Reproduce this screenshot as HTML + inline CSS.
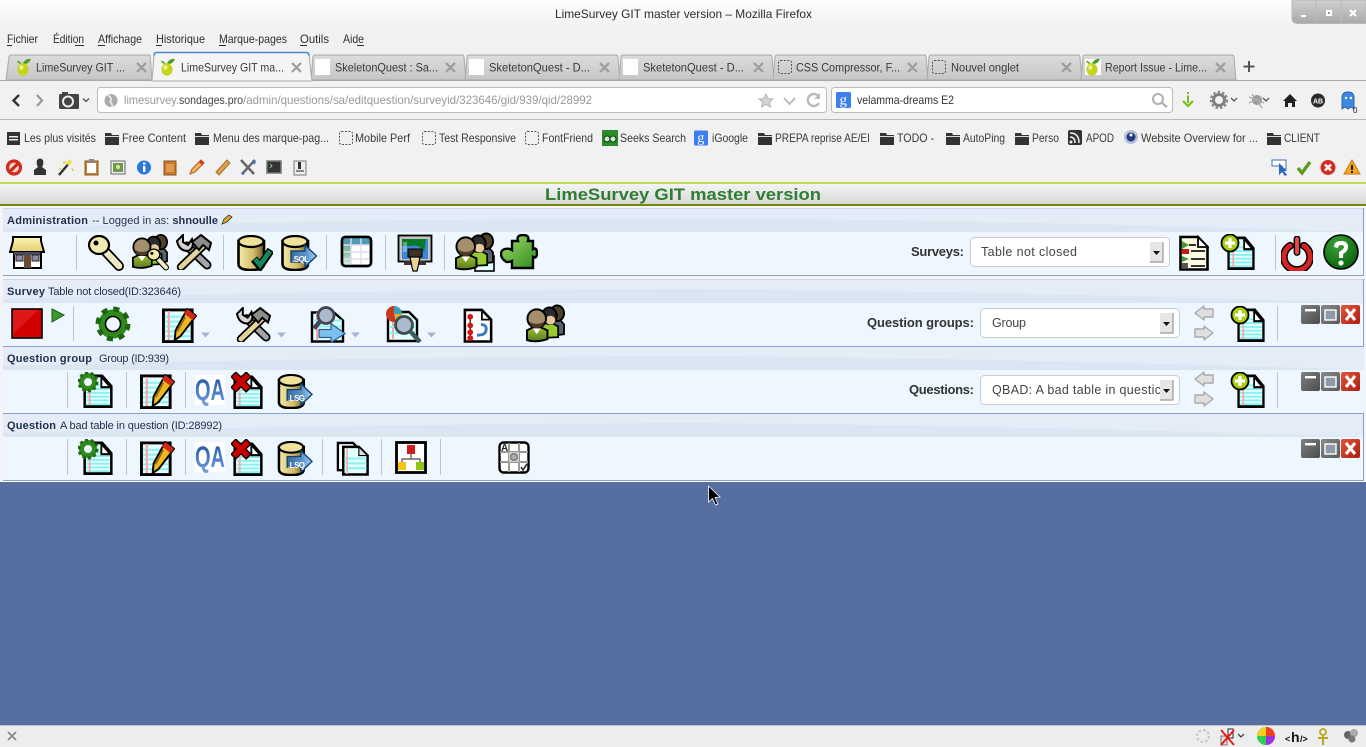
<!DOCTYPE html>
<html><head><meta charset="utf-8"><title>LimeSurvey GIT master version</title>
<style>
html,body{margin:0;padding:0;background:#566fa0;overflow:hidden;width:1366px;height:747px}
svg{display:block}
text{font-family:"Liberation Sans",sans-serif;white-space:pre}
.c{font-size:12px;fill:#3a3a3a}
.m{font-size:12px;fill:#2e2e2e}
.p{font-size:11px;fill:#1f2f4c}
.b{font-size:11px;font-weight:bold;fill:#1f2f4c}
.l{font-size:13px;font-weight:bold;fill:#333}
.s{font-size:12.5px;fill:#444}
</style></head><body>
<svg width="1366" height="747" viewBox="0 0 1366 747" xmlns="http://www.w3.org/2000/svg">
<defs>
<linearGradient id="gt" x1="0" y1="0" x2="0" y2="1"><stop offset="0" stop-color="#fff"/><stop offset="1" stop-color="#f0f0f0"/></linearGradient>
<linearGradient id="gw" x1="0" y1="0" x2="0" y2="1"><stop offset="0" stop-color="#d0d0d0"/><stop offset="1" stop-color="#a9a9a9"/></linearGradient>
<linearGradient id="gtab" x1="0" y1="0" x2="0" y2="1"><stop offset="0" stop-color="#dcdcdc"/><stop offset="1" stop-color="#c6c6c6"/></linearGradient>
<linearGradient id="ghd" x1="0" y1="0" x2="0" y2="1"><stop offset="0" stop-color="#f4f4f4"/><stop offset="1" stop-color="#d8d8d8"/></linearGradient>
<linearGradient id="gold" x1="0" y1="0" x2="1" y2="0"><stop offset="0" stop-color="#f4eaa8"/><stop offset=".6" stop-color="#d2bc68"/><stop offset="1" stop-color="#6e5a24"/></linearGradient>
<linearGradient id="gbtn" x1="0" y1="0" x2="1" y2="1"><stop offset="0" stop-color="#808080"/><stop offset="1" stop-color="#4c4c4c"/></linearGradient>
<linearGradient id="gred" x1="0" y1="0" x2="1" y2="1"><stop offset="0" stop-color="#e4563a"/><stop offset="1" stop-color="#a81e10"/></linearGradient>
<radialGradient id="ggreen" cx=".4" cy=".3" r=".8"><stop offset="0" stop-color="#3aa23a"/><stop offset="1" stop-color="#045c04"/></radialGradient>
<linearGradient id="gpz" x1="0" y1="0" x2="1" y2="1"><stop offset="0" stop-color="#a4dc6c"/><stop offset="1" stop-color="#2c8a1e"/></linearGradient>
<linearGradient id="gqa" x1="0" y1="0" x2="0" y2="1"><stop offset="0" stop-color="#1a50a6"/><stop offset="1" stop-color="#7aa4e0"/></linearGradient>
<linearGradient id="garr" x1="0" y1="0" x2="1" y2="0"><stop offset="0" stop-color="#3a6c9c"/><stop offset=".6" stop-color="#5c94c8"/><stop offset="1" stop-color="#a4d4fa"/></linearGradient>
<linearGradient id="groof" x1="0" y1="0" x2="0" y2="1"><stop offset="0" stop-color="#fbf4b8"/><stop offset="1" stop-color="#e4d070"/></linearGradient>
<linearGradient id="gbody" x1="0" y1="0" x2="0" y2="1"><stop offset="0" stop-color="#a8c83a"/><stop offset="1" stop-color="#5a7c1c"/></linearGradient>
<linearGradient id="gtl" x1="0" y1="0" x2="0" y2="1"><stop offset="0" stop-color="#58a0a0"/><stop offset=".6" stop-color="#8cc8a0"/><stop offset="1" stop-color="#e8f4ec"/></linearGradient>

<symbol id="page" viewBox="0 0 36 36" preserveAspectRatio="none"><path d="M2 2H23L34 13V34.500H2Z" fill="#e4ffff" stroke="#000" stroke-width="3"/><path d="M4 12H22M4 16H32M4 20H32M4 24H32M4 28H32M4 32H32" stroke="#8af0f0" stroke-width="2"/><path d="M8 4V33" stroke="#f6a8a8" stroke-width="2.200"/><path d="M22 3V14H33Z" fill="#fff" stroke="#000" stroke-width="2.200"/></symbol>
<symbol id="plusdoc" viewBox="0 0 36 36"><use href="#page" x="7" y="2" width="28" height="34"/><circle cx="10" cy="9" r="8.500" fill="#a8d010" stroke="#000" stroke-width="1.800"/><path d="M10 4V14M5 9H15" stroke="#fff" stroke-width="3.200"/></symbol>
<symbol id="geardoc" viewBox="0 0 36 36"><use href="#page" x="5" y="2" width="30" height="34"/><circle cx="10" cy="10" r="6.500" fill="#eef6ff" stroke="#2f8a1e" stroke-width="5"/><circle cx="10" cy="10" r="9" fill="none" stroke="#1e6a10" stroke-width="3" stroke-dasharray="3 2.600"/></symbol>
<symbol id="deldoc" viewBox="0 0 33 37"><use href="#page" x="2" y="3" width="30" height="34"/><path d="M2 2L18 18M18 2L2 18" stroke="#000" stroke-width="8"/><path d="M3 3L17 17M17 3L3 17" stroke="#c80000" stroke-width="5.500"/></symbol>
<symbol id="editdoc" viewBox="0 0 36 36"><path d="M1.500 2H31V34.500H1.500Z" fill="#e4ffff" stroke="#000" stroke-width="3"/><path d="M3 9H29M3 14H29M3 19H29M3 24H29M3 29H29" stroke="#8af0f0" stroke-width="2"/><path d="M7 3V33" stroke="#f6a8a8" stroke-width="2.200"/><path d="M26 1L35 8L19 29L13 33L14 23Z" fill="#f0b820" stroke="#000" stroke-width="2"/><path d="M26 1L35 8L31.500 12.500L22.500 5.500Z" fill="#d02818"/><path d="M24 9L16 24" stroke="#8c6010" stroke-width="1.500"/></symbol>
<symbol id="gear" viewBox="0 0 36 36"><circle cx="18" cy="18" r="11" fill="none" stroke="#2f8a1e" stroke-width="7"/><circle cx="18" cy="18" r="15" fill="none" stroke="#1c6410" stroke-width="5" stroke-dasharray="6 5.800"/><circle cx="18" cy="18" r="7.500" fill="#eef6ff" stroke="#000" stroke-width="1.500"/></symbol>
<symbol id="key" viewBox="0 0 36 36"><path d="M16 15L31 31" stroke="#000" stroke-width="10" stroke-linecap="round"/><path d="M16 15L31 31" stroke="#efe9c4" stroke-width="6.500" stroke-linecap="round"/><ellipse cx="11" cy="10" rx="10" ry="9" fill="#f2eab0" stroke="#000" stroke-width="2.200"/><circle cx="8" cy="8" r="2.500" fill="#000"/></symbol>
<symbol id="users" viewBox="0 0 40 38"><path d="M24 32V17L34 14L39 20V30Z" fill="#56666e" stroke="#000" stroke-width="1.800"/><ellipse cx="32" cy="8.500" rx="7" ry="8" fill="#4f422c" stroke="#000" stroke-width="2"/><path d="M14 34V21L24 17L33 22V33Z" fill="#96cc30" stroke="#000" stroke-width="1.800"/><ellipse cx="24" cy="11" rx="7.500" ry="8.500" fill="#2c2c2c" stroke="#000" stroke-width="2"/><ellipse cx="25" cy="15.500" rx="5" ry="4.500" fill="#e8c8a0"/><path d="M1 36V26L11 21L22 26V35Q10 39 1 36Z" fill="url(#gbody)" stroke="#000" stroke-width="2"/><ellipse cx="11" cy="14" rx="9.500" ry="9.500" fill="#a58e6c" stroke="#000" stroke-width="2"/><path d="M3 17Q11 22 19 17Q18 23 11 24Q4 23 3 17Z" fill="#4e3a26"/><path d="M7 24L11 30L15 24Z" fill="#fff"/></symbol>
<symbol id="ukey" viewBox="0 0 38 38"><use href="#users" x="0" y="0" width="36" height="37"/><use href="#key" x="15" y="15" width="22" height="23"/></symbol>
<symbol id="udoc" viewBox="0 0 40 40"><rect x="20" y="24" width="19" height="15" fill="#e4ffff" stroke="#000" stroke-width="1.600"/><use href="#users" x="0" y="0" width="39" height="39"/></symbol>
<symbol id="tools" viewBox="0 0 36 36"><path d="M11 12L31 31" stroke="#000" stroke-width="9" stroke-linecap="round"/><path d="M11 12L31 31" stroke="#a4a4a4" stroke-width="5.500" stroke-linecap="round"/><path d="M1 7L7 1L7 8L12 11L16 5Q19 14 12 17Q3 17 1 7Z" fill="#d4d4d4" stroke="#000" stroke-width="2"/><path d="M27 12L5 33" stroke="#000" stroke-width="8.500" stroke-linecap="round"/><path d="M27 12L5 33" stroke="#e4d49c" stroke-width="5" stroke-linecap="round"/><path d="M16 8L25 1L35 9L33 16L27 11L23 16Z" fill="#8c8c8c" stroke="#000" stroke-width="2"/></symbol>
<symbol id="db" viewBox="0 0 36 36"><path d="M1.500 6V29Q1.500 35 14 35Q27 35 27 29V6Z" fill="url(#gold)" stroke="#000" stroke-width="2.600"/><ellipse cx="14" cy="6.500" rx="12.500" ry="5.500" fill="#efe39c" stroke="#000" stroke-width="2.200"/></symbol>
<symbol id="dbcheck" viewBox="0 0 36 36"><use href="#db"/><path d="M17 24L23 31L34 15" fill="none" stroke="#000" stroke-width="8"/><path d="M18 24L23 30L33 16" fill="none" stroke="#12885c" stroke-width="4.800"/></symbol>
<symbol id="dbout" viewBox="0 0 36 36"><use href="#db"/><path d="M10 16H24V10L35.500 21L24 32V27H10Z" fill="url(#garr)" stroke="#16446e" stroke-width="1.400"/></symbol>
<symbol id="table" viewBox="0 0 33 33"><rect x="2" y="2" width="29" height="29" rx="3" fill="#fff" stroke="#000" stroke-width="2.400"/><path d="M2 2H11V31H2Z" fill="url(#gtl)"/><path d="M2 2H31V10H2Z" fill="#4f9ab4"/><path d="M11 2V31M21 2V31M2 10H31M2 17H31M2 24H31" stroke="#dde" stroke-width="1.400"/><rect x="2" y="2" width="29" height="29" rx="3.500" fill="none" stroke="#000" stroke-width="2.600"/></symbol>
<symbol id="mon" viewBox="0 0 36 38"><rect x="1.500" y="1.500" width="33" height="26" fill="#c4c4c4" stroke="#000" stroke-width="1.800"/><rect x="5" y="5" width="26" height="20" fill="#3c88d8"/><path d="M5 5H29L27 19Q24 10 14 12H5Z" fill="#0a7a28"/><path d="M6 8H10V18H6Z" fill="#fff" opacity=".35"/><rect x="7" y="27" width="22" height="4" fill="#333"/><rect x="11" y="15" width="14" height="8" fill="#3c3024" stroke="#000"/><path d="M13 23H23L21 33L20 37H16L15 33Z" fill="#ecd494" stroke="#000" stroke-width="1.200"/></symbol>
<symbol id="puz" viewBox="0 0 38 36"><path d="M12 7H18Q16 1 23 1Q30 1 28 7H33V15Q37 13 37 19Q37 25 33 23V34H12V27Q7 29 5 27Q1 24 1 20Q1 16 5 15Q9 14 12 16Z" fill="url(#gpz)" stroke="#000" stroke-width="2.400"/></symbol>
<symbol id="home" viewBox="0 0 36 34"><rect x="5" y="14" width="27" height="19" fill="#fff" stroke="#000" stroke-width="2"/><path d="M1 17L4 6L4 2H32V6L35 17Z" fill="url(#groof)" stroke="#000" stroke-width="2"/><rect x="5" y="17" width="26" height="3" fill="#4c4c60"/><rect x="15" y="20" width="7" height="13" fill="#6a4a32"/><rect x="7" y="20" width="7" height="6" fill="#8e8aa8" stroke="#222"/><rect x="23" y="20" width="7" height="6" fill="#8e8aa8" stroke="#222"/></symbol>
<symbol id="list" viewBox="0 0 30 36"><path d="M1.500 2H19L28.500 12V34.500H1.500Z" fill="#fffce0" stroke="#000" stroke-width="2.600"/><path d="M19 2V12H29Z" fill="#fff" stroke="#000" stroke-width="1.800"/><path d="M3 6L10 10L3 14Z" fill="#3c9c3c"/><rect x="3" y="14" width="7" height="5" fill="#c81818"/><path d="M3 21L10 24L3 27Z" fill="#3c9c3c"/><path d="M3 28H9V33H3Z" fill="#555"/><path d="M10 10H17M12 16H26M12 24H26M12 31H26" stroke="#333" stroke-width="2"/></symbol>
<symbol id="power" viewBox="0 0 32 36"><path d="M9 10A13.500 13.500 0 1 0 23 10" fill="none" stroke="#000" stroke-width="8" stroke-linecap="round"/><path d="M9 10A13.500 13.500 0 1 0 23 10" fill="none" stroke="#d62424" stroke-width="5" stroke-linecap="round"/><path d="M16 3V17" stroke="#000" stroke-width="7" stroke-linecap="round"/><path d="M16 3V17" stroke="#e24c4c" stroke-width="4" stroke-linecap="round"/></symbol>
<symbol id="help" viewBox="0 0 36 36"><circle cx="18" cy="18" r="17" fill="url(#ggreen)" stroke="#000" stroke-width="1.600"/><path d="M11 13Q11 7 18 7Q25 7 25 13Q25 17 20 20V24H16V18Q21 15 21 13Q21 11 18 11Q15 11 15 14Z" fill="#fff"/><circle cx="18" cy="29" r="2.600" fill="#fff"/></symbol>
<symbol id="searchx" viewBox="0 0 36 36"><path d="M2 6H24L33 14V35H2Z" fill="#e4ffff" stroke="#000" stroke-width="2.400"/><path d="M7 6V34" stroke="#f6a8a8" stroke-width="2"/><path d="M3 14H32M3 20H32" stroke="#8af0f0" stroke-width="2"/><path d="M4 22L10 15" stroke="#445" stroke-width="4.500"/><circle cx="16" cy="9" r="8" fill="#aabbd0" stroke="#445" stroke-width="2.800"/><path d="M9 23H21V17L35 27L21 36V31H9Z" fill="#7cc0f0" stroke="#2c5c8c" stroke-width="1.200"/></symbol>
<symbol id="stats" viewBox="0 0 38 38"><path d="M4 7H25L33 15V36H4Z" fill="#e4ffff" stroke="#000" stroke-width="2.400"/><path d="M9 8V35" stroke="#f6a8a8" stroke-width="2"/><path d="M5 22H32M5 28H32" stroke="#8af0f0" stroke-width="2"/><circle cx="10" cy="9" r="8" fill="#c8381c"/><path d="M10 9V1A8 8 0 0 1 18 9Z" fill="#38a0c0"/><path d="M10 9H18A8 8 0 0 1 12 17Z" fill="#e0b02c"/><path d="M27 27L36 37" stroke="#3c5c5c" stroke-width="4.500"/><circle cx="20" cy="20" r="8.500" fill="#aabbd0" stroke="#3c4c4c" stroke-width="2.800"/></symbol>
<symbol id="tree" viewBox="0 0 30 36"><path d="M1.500 2H19L28.500 12V34.500H1.500Z" fill="#fff" stroke="#000" stroke-width="2.600"/><path d="M19 2V12H29" fill="none" stroke="#000" stroke-width="1.800"/><path d="M7 8V31" stroke="#333" stroke-width="1.500"/><circle cx="7" cy="9" r="3" fill="#d01818"/><circle cx="7" cy="18" r="3" fill="#d01818"/><circle cx="7" cy="25" r="3" fill="#d01818"/><circle cx="7" cy="31" r="3" fill="#d01818"/><path d="M18 17Q25 17 23 24Q22 28 14 28" fill="none" stroke="#3c78c0" stroke-width="3"/></symbol>
<symbol id="copy" viewBox="0 0 33 36"><path d="M1.500 2H17L24 9V30H1.500Z" fill="#fff" stroke="#000" stroke-width="2.400"/><path d="M7 6H23L32 15V34.500H7Z" fill="#e4ffff" stroke="#000" stroke-width="2.600"/><path d="M8 18H31M8 23H31M8 28H31" stroke="#8af0f0" stroke-width="2"/><path d="M11 7V34" stroke="#f6a8a8" stroke-width="1.600"/><path d="M23 6V15H32Z" fill="#ddd" stroke="#000" stroke-width="1.200"/></symbol>
<symbol id="cond" viewBox="0 0 32 33"><rect x="1.500" y="1.500" width="29" height="30" fill="#fff" stroke="#000" stroke-width="2.800"/><rect x="12" y="4" width="8" height="9" fill="#d01c1c"/><path d="M16 13V18M7 22V18H25V22" fill="none" stroke="#666" stroke-width="1.400"/><rect x="3" y="21" width="8" height="8" fill="#f4c414"/><rect x="21" y="21" width="8" height="8" fill="#90c414"/></symbol>
<symbol id="matrix" viewBox="0 0 32 33"><rect x="1.500" y="1.500" width="29" height="30" rx="4" fill="#fff" stroke="#000" stroke-width="2.400"/><path d="M11 2V31M21 2V31M2 11H30M2 21H30" stroke="#999" stroke-width="2"/><path d="M11 11H21V21H11Z" fill="#ccc"/><circle cx="16" cy="16" r="3.400" fill="#aaa" stroke="#666"/><text x="3" y="10" style="font-size:10px;font-weight:bold;fill:#222">A</text><path d="M23 26L25 29L29 23" fill="none" stroke="#333" stroke-width="1.600"/></symbol>
<symbol id="wb" viewBox="0 0 60 19"><rect x="0" y="0" width="19" height="19" rx="2" fill="url(#gbtn)"/><rect x="4" y="4" width="11" height="2.400" fill="#fff"/><rect x="20" y="0" width="19" height="19" rx="2" fill="url(#gbtn)" opacity=".92"/><rect x="24" y="5" width="11" height="10" fill="#8f9aa8" stroke="#fff" stroke-width="1.400"/><rect x="40" y="0" width="19" height="19" rx="2" fill="url(#gred)"/><path d="M45 4L54 15M54 4L45 15" stroke="#fff" stroke-width="3"/></symbol>
<symbol id="arrows" viewBox="0 0 20 36"><path d="M1 8L10 1V4H19V12H10V15Z" fill="#e0e0e0" stroke="#aaa" stroke-width="1.400" stroke-linejoin="round"/><path d="M19 28L10 21V24H1V32H10V35Z" fill="#e0e0e0" stroke="#aaa" stroke-width="1.400" stroke-linejoin="round"/></symbol>
<symbol id="lime" viewBox="0 0 16 18"><path d="M7 5Q10 0 15 1Q13 6 8 6Z" fill="#4a9c22"/><path d="M5 5Q3 2 1 3Q2 6 6 6Z" fill="#5aa82c"/><ellipse cx="7" cy="11.500" rx="5.600" ry="6.200" fill="#c4d420"/><ellipse cx="5.400" cy="9.500" rx="2" ry="2.400" fill="#f0f488"/></symbol>
<symbol id="folder" viewBox="0 0 14 14"><path d="M0 2H6L7 4H14V14H0Z" fill="#333"/><rect x="0" y="5" width="14" height="1" fill="#ddd"/></symbol>
<symbol id="dash" viewBox="0 0 14 14"><rect x=".5" y=".5" width="13" height="13" rx="2" fill="none" stroke="#555" stroke-dasharray="2 1.400"/></symbol>
<symbol id="gg" viewBox="0 0 15 16"><rect width="15" height="16" rx="1.500" fill="#3d7ef0"/><text x="3.500" y="12.500" style="font-size:15px;fill:#fff;font-family:'Liberation Serif',serif">g</text></symbol>
</defs>

<!-- window chrome -->
<rect width="1366" height="181" fill="#f1f1f1"/>
<rect width="1366" height="30" fill="url(#gt)"/>
<text x="555" y="18" class="m" textLength="257" lengthAdjust="spacingAndGlyphs" style="fill:#2b2b2b">LimeSurvey GIT master version – Mozilla Firefox</text>
<path d="M1292 0V18Q1292 23 1297 23.500H1366V0Z" fill="url(#gw)" stroke="#b8b8b8"/>
<path d="M1316 0V23M1341 0V23" stroke="#bcbcbc"/>
<rect x="1301" y="15" width="5" height="2" fill="#fff"/><rect x="1326" y="10" width="6" height="6" fill="#fff"/><rect x="1328" y="12" width="2" height="2" fill="#999"/>
<path d="M1350 10L1356 16M1356 10L1350 16" stroke="#fff" stroke-width="2"/>

<!-- menu -->
<text x="7" y="43" class="m" textLength="31" lengthAdjust="spacingAndGlyphs">Fichier</text>
<text x="53" y="43" class="m" textLength="31" lengthAdjust="spacingAndGlyphs">Édition</text>
<text x="98" y="43" class="m" textLength="44" lengthAdjust="spacingAndGlyphs">Affichage</text>
<text x="156" y="43" class="m" textLength="49" lengthAdjust="spacingAndGlyphs">Historique</text>
<text x="219" y="43" class="m" textLength="68" lengthAdjust="spacingAndGlyphs">Marque-pages</text>
<text x="300" y="43" class="m" textLength="29" lengthAdjust="spacingAndGlyphs">Outils</text>
<text x="343" y="43" class="m" textLength="21" lengthAdjust="spacingAndGlyphs">Aide</text>
<path d="M7 45.500H12M75 45.500H84M98 45.500H105M156 45.500H162M219 45.500H226M300 45.500H307M357 45.500H364" stroke="#2e2e2e"/>

<!-- tabs -->
<path d="M6 80L9 57Q9 55 12 55H150L152 80Z" fill="url(#gtab)" stroke="#aaa"/>
<path d="M311 80L313 57Q313 55 316 55H462Q464 55 464 57L466 80Z" fill="url(#gtab)" stroke="#aaa"/>
<path d="M465 80L467 57Q467 55 470 55H616Q618 55 618 57L620 80Z" fill="url(#gtab)" stroke="#aaa"/>
<path d="M619 80L621 57Q621 55 624 55H770Q772 55 772 57L774 80Z" fill="url(#gtab)" stroke="#aaa"/>
<path d="M773 80L775 57Q775 55 778 55H924Q926 55 926 57L928 80Z" fill="url(#gtab)" stroke="#aaa"/>
<path d="M927 80L929 57Q929 55 932 55H1078Q1080 55 1080 57L1082 80Z" fill="url(#gtab)" stroke="#aaa"/>
<path d="M1081 80L1083 57Q1083 55 1086 55H1232Q1234 55 1234 57L1236 80Z" fill="url(#gtab)" stroke="#aaa"/>
<rect x="0" y="80" width="1366" height="1" fill="#a8a8a8"/>
<path d="M152 81L154 55Q154 52.500 157 52.500H306Q309 52.500 309 55L312 81Z" fill="#f4f4f4" stroke="#aaa"/>
<path d="M154 56Q154 52.500 157 52.500H306Q309 52.500 309 56" fill="none" stroke="#4a8ad4" stroke-width="1.400"/>
<use href="#lime" x="16" y="58" width="16" height="18"/>
<use href="#lime" x="160" y="58" width="16" height="18"/>
<rect x="315" y="59" width="15" height="16" fill="#fff"/><rect x="469" y="59" width="15" height="16" fill="#fff"/><rect x="623" y="59" width="15" height="16" fill="#fff"/>
<use href="#dash" x="778" y="60" width="14" height="14"/><use href="#dash" x="932" y="60" width="14" height="14"/>
<rect x="1085" y="59" width="16" height="16" fill="#fff"/><use href="#lime" x="1085" y="58" width="16" height="18"/>
<text x="36" y="71.500" class="c" textLength="89" lengthAdjust="spacingAndGlyphs">LimeSurvey GIT ...</text>
<text x="181" y="71.500" class="c" textLength="103" lengthAdjust="spacingAndGlyphs">LimeSurvey GIT ma...</text>
<text x="335" y="71.500" class="c" textLength="103" lengthAdjust="spacingAndGlyphs">SkeletonQuest : Sa...</text>
<text x="489" y="71.500" class="c" textLength="101" lengthAdjust="spacingAndGlyphs">SketetonQuest - D...</text>
<text x="643" y="71.500" class="c" textLength="101" lengthAdjust="spacingAndGlyphs">SketetonQuest - D...</text>
<text x="796" y="71.500" class="c" textLength="104" lengthAdjust="spacingAndGlyphs">CSS Compressor, F...</text>
<text x="951" y="71.500" class="c" textLength="68" lengthAdjust="spacingAndGlyphs">Nouvel onglet</text>
<text x="1105" y="71.500" class="c" textLength="102" lengthAdjust="spacingAndGlyphs">Report Issue - Lime...</text>
<path d="M137 63L146 72M146 63L137 72M292 63L301 72M301 63L292 72M446 63L455 72M455 63L446 72M600 63L609 72M609 63L600 72M754 63L763 72M763 63L754 72M908 63L917 72M917 63L908 72M1062 63L1071 72M1071 63L1062 72M1216 63L1225 72M1225 63L1216 72" stroke="#9c9c9c" stroke-width="2.200"/>
<path d="M1249 61V72M1243.500 66.500H1254.500" stroke="#555" stroke-width="2"/>

<!-- nav bar -->
<rect x="0" y="119" width="1366" height="1" fill="#b8b8b8"/>
<path d="M19 95L13.500 100.500L19 106" fill="none" stroke="#333" stroke-width="2.400"/>
<path d="M37 95L42 100.500L37 106" fill="none" stroke="#999" stroke-width="2.200"/>
<rect x="59" y="94" width="20" height="15" rx="1.500" fill="#444"/><rect x="62" y="92" width="6" height="3" fill="#444"/><circle cx="68" cy="101.500" r="5" fill="none" stroke="#eee" stroke-width="2"/>
<path d="M83 98.500L86 101.500L89 98.500" fill="none" stroke="#555" stroke-width="1.300"/>
<rect x="97.500" y="87.500" width="729" height="25" rx="3" fill="#fff" stroke="#bbb"/>
<circle cx="111" cy="100.500" r="6.500" fill="#aaa"/><path d="M108 95Q113 99 110 102Q113 104 112 107" fill="none" stroke="#eee" stroke-width="1.600"/>
<text x="124" y="104" class="c" style="fill:#999" textLength="55" lengthAdjust="spacingAndGlyphs">limesurvey.</text>
<text x="179" y="104" class="c" style="fill:#444" textLength="64" lengthAdjust="spacingAndGlyphs">sondages.pro</text>
<text x="243" y="104" class="c" style="fill:#999" textLength="349" lengthAdjust="spacingAndGlyphs">/admin/questions/sa/editquestion/surveyid/323646/gid/939/qid/28992</text>
<path d="M766 94L768 98.500L773 99L769.500 102L770.500 107L766 104.500L761.500 107L762.500 102L759 99L764 98.500Z" fill="#d4d4d4" stroke="#b4b4b4"/>
<path d="M784 98L789.500 104L795 98" fill="none" stroke="#bbb" stroke-width="2"/>
<path d="M819 103A6 6 0 1 1 819 97" fill="none" stroke="#bbb" stroke-width="2.400"/><path d="M820 93V99H814Z" fill="#bbb"/>
<rect x="831.500" y="87.500" width="341" height="25" rx="3" fill="#fff" stroke="#bbb"/>
<use href="#gg" x="836" y="92" width="15" height="16"/>
<text x="857" y="104" class="c" style="fill:#333" textLength="97" lengthAdjust="spacingAndGlyphs">velamma-dreams E2</text>
<circle cx="1158" cy="99" r="5" fill="none" stroke="#b0b0b0" stroke-width="2"/><path d="M1162 103L1167 107" stroke="#b0b0b0" stroke-width="2.400"/>
<path d="M1188 92V97" stroke="#7cbc1c" stroke-width="2" stroke-dasharray="2 1.500"/><path d="M1188 97V103" stroke="#7cbc1c" stroke-width="2"/><path d="M1183 101L1188 106L1193 101" fill="none" stroke="#7cbc1c" stroke-width="2.200"/>
<circle cx="1219" cy="100" r="5.500" fill="none" stroke="#808080" stroke-width="3"/><circle cx="1219" cy="100" r="8" fill="none" stroke="#8c8c8c" stroke-width="2.400" stroke-dasharray="2.500 2"/>
<path d="M1231 98L1234 101L1237 98M1263 98L1266 101L1269 98" fill="none" stroke="#555" stroke-width="1.300"/>
<ellipse cx="1257" cy="100" rx="5" ry="5" fill="#999"/><path d="M1249 97L1264 103M1249 103L1262 97M1252 94L1262 108" stroke="#aaa" stroke-width="1.300"/>
<path d="M1290 94L1297 101H1295V107H1292V103H1288V107H1285V101H1283Z" fill="#222"/>
<circle cx="1318" cy="100.500" r="7" fill="#2a2a2a"/><text x="1313" y="103.500" style="font-size:7px;font-weight:bold;fill:#fff">AB</text>
<path d="M1342 109V98Q1342 92 1348 92Q1354 92 1354 98V109L1351 107L1348 109L1345 107Z" fill="#3c8ae0" stroke="#2464b4"/><circle cx="1346" cy="98" r="1.200" fill="#fff"/><circle cx="1351" cy="98" r="1.200" fill="#fff"/>
<text x="1353" y="113" style="font-size:8px;fill:#222">0</text>

<!-- bookmarks -->
<rect x="7" y="132" width="13" height="13" fill="#333"/><rect x="9" y="136" width="9" height="1.500" fill="#eee"/><rect x="9" y="139" width="9" height="1.500" fill="#eee"/>
<use href="#folder" x="105" y="131" width="14" height="14"/><use href="#folder" x="195" y="131" width="14" height="14"/>
<use href="#dash" x="339" y="131" width="14" height="14"/><use href="#dash" x="422" y="131" width="14" height="14"/><use href="#dash" x="525" y="131" width="14" height="14"/>
<rect x="602" y="130" width="16" height="16" fill="#2c8a2c"/><path d="M604 139a3 3 0 1 0 6 0a3 3 0 1 0 -6 0M610 139a3 3 0 1 0 6 0a3 3 0 1 0 -6 0" fill="#cfe8cf" stroke="#0a400a"/>
<use href="#gg" x="694" y="130" width="14" height="16"/>
<use href="#folder" x="758" y="131" width="14" height="14"/><use href="#folder" x="880" y="131" width="14" height="14"/><use href="#folder" x="946" y="131" width="14" height="14"/><use href="#folder" x="1015" y="131" width="14" height="14"/><use href="#folder" x="1267" y="131" width="14" height="14"/>
<rect x="1068" y="130" width="14" height="15" rx="2" fill="#333"/><circle cx="1071" cy="142" r="1.500" fill="#eee"/><path d="M1070 137Q1075 137 1075 143M1070 133Q1079 133 1079 143" fill="none" stroke="#eee" stroke-width="1.500"/>
<circle cx="1131" cy="137" r="7" fill="#b8c0dc"/><circle cx="1131" cy="137" r="4.500" fill="#223a80"/><circle cx="1131" cy="135" r="1.500" fill="#fff"/>
<text x="24" y="142" class="c" textLength="72" lengthAdjust="spacingAndGlyphs">Les plus visités</text>
<text x="122" y="142" class="c" textLength="64" lengthAdjust="spacingAndGlyphs">Free Content</text>
<text x="213" y="142" class="c" textLength="116" lengthAdjust="spacingAndGlyphs">Menu des marque-pag...</text>
<text x="355" y="142" class="c" textLength="55" lengthAdjust="spacingAndGlyphs">Mobile Perf</text>
<text x="439" y="142" class="c" textLength="77" lengthAdjust="spacingAndGlyphs">Test Responsive</text>
<text x="542" y="142" class="c" textLength="51" lengthAdjust="spacingAndGlyphs">FontFriend</text>
<text x="620" y="142" class="c" textLength="66" lengthAdjust="spacingAndGlyphs">Seeks Search</text>
<text x="712" y="142" class="c" textLength="36" lengthAdjust="spacingAndGlyphs">iGoogle</text>
<text x="775" y="142" class="c" textLength="95" lengthAdjust="spacingAndGlyphs">PREPA reprise AE/EI</text>
<text x="897" y="142" class="c" textLength="37" lengthAdjust="spacingAndGlyphs">TODO -</text>
<text x="963" y="142" class="c" textLength="42" lengthAdjust="spacingAndGlyphs">AutoPing</text>
<text x="1032" y="142" class="c" textLength="27" lengthAdjust="spacingAndGlyphs">Perso</text>
<text x="1086" y="142" class="c" textLength="28" lengthAdjust="spacingAndGlyphs">APOD</text>
<text x="1141" y="142" class="c" textLength="117" lengthAdjust="spacingAndGlyphs">Website Overview for ...</text>
<text x="1284" y="142" class="c" textLength="36" lengthAdjust="spacingAndGlyphs">CLIENT</text>

<!-- addon toolbar -->
<circle cx="14" cy="167.500" r="6.500" fill="#f4d8d4" stroke="#d02c20" stroke-width="3.200"/><path d="M9.500 172L18.500 163" stroke="#d02c20" stroke-width="3.200"/>
<path d="M37 160Q40 157 43 160Q44 164 42 167L46 170V175H34V170L38 167Q36 164 37 160Z" fill="#333"/>
<path d="M59 175L70 162" stroke="#333" stroke-width="2.400"/><path d="M70 159L72 162L69 166L66 163Z" fill="#f4e24c"/><path d="M63 163L66 162M72 168L73 171M59 170L61 168" stroke="#eccc3c" stroke-width="1.500"/>
<rect x="85" y="161" width="13" height="14" fill="#c8823c" stroke="#8c5a20"/><rect x="87" y="163" width="9" height="10" fill="#fff"/><rect x="89" y="159" width="5" height="4" fill="#888"/>
<rect x="111" y="161" width="14" height="13" fill="#eee" stroke="#666"/><rect x="113" y="163" width="10" height="9" fill="#6a9a50"/><circle cx="118" cy="167" r="2" fill="#f0e08c"/>
<circle cx="144" cy="167.500" r="7" fill="#2a78d8"/><rect x="143" y="166" width="2.400" height="6" fill="#fff"/><rect x="143" y="162.500" width="2.400" height="2.200" fill="#fff"/>
<rect x="164" y="161" width="12" height="14" fill="#c8782c" stroke="#8c5420"/><rect x="166" y="164" width="8" height="8" fill="#e09c4c"/>
<path d="M190 174L192 169L201 160L204 163L195 172Z" fill="#eeb85c" stroke="#b8541c"/><path d="M201 160L204 163L202 165L199 162Z" fill="#d8341c"/>
<path d="M216 172L227 160L230 163L219 175Z" fill="#d8a050" stroke="#a87028"/>
<path d="M241 160L254 174M255 160L242 174" stroke="#666" stroke-width="2.400"/><path d="M252 160L256 162L254 165Z" fill="#3c70b8"/><path d="M241 174L245 170L244 175Z" fill="#3c70b8"/>
<rect x="267" y="161" width="14" height="12" fill="#333" stroke="#777" stroke-width="1.500"/><path d="M270 164L272 166L270 168" fill="none" stroke="#8c8" stroke-width="1"/>
<rect x="294" y="161" width="12" height="14" fill="#eee" stroke="#777"/><rect x="298" y="162" width="3" height="7" fill="#333"/><rect x="296" y="170" width="8" height="2" fill="#888"/>
<path d="M1272 160H1286V169H1282V166H1272Z" fill="#fff" stroke="#3c70b8"/><path d="M1279 163L1279 175L1282 172L1285 176L1287 175L1284 171H1287Z" fill="#2a68c0"/>
<path d="M1298 168L1302 173L1310 162" fill="none" stroke="#5c9c1c" stroke-width="3.400"/>
<circle cx="1328" cy="167.500" r="7.500" fill="#d42c20"/><path d="M1325 164.500L1331 170.500M1331 164.500L1325 170.500" stroke="#fff" stroke-width="2.400"/>
<path d="M1352 160L1360 174H1344Z" fill="#f4a61c" stroke="#c87c10"/><rect x="1351" y="165" width="2" height="5" fill="#222"/><rect x="1351" y="171" width="2" height="2" fill="#222"/>

<!-- page -->
<rect x="0" y="181" width="1366" height="301" fill="#f4f4f8"/>
<rect x="0" y="181" width="1366" height="1" fill="#eef5d0"/>
<rect x="0" y="182" width="1366" height="2" fill="#c0dc60"/>
<rect x="0" y="184" width="1366" height="20" fill="url(#ghd)"/>
<rect x="0" y="204" width="1366" height="2" fill="#6e8a08"/>
<text x="545" y="200" textLength="276" lengthAdjust="spacingAndGlyphs" style="font-size:17px;font-weight:bold;fill:#2e7d32">LimeSurvey GIT master version</text>

<!-- Admin panel -->
<rect x="3" y="209" width="1361" height="23" fill="#e3ecf7"/>
<path d="M3 232V228Q300 220 680 218Q1000 220 1364 232Z" fill="#dbe6f3"/>
<rect x="3" y="232" width="1361" height="43" fill="#eef6ff"/>
<rect x="3" y="275" width="1361" height="1" fill="#8ba0c8"/><rect x="3" y="208" width="1361" height="1" fill="#ccd8ea"/><rect x="1363" y="208" width="1" height="68" fill="#8ba0c8"/>
<!-- Survey panel -->
<rect x="3" y="280" width="1361" height="23" fill="#e3ecf7"/>
<path d="M3 303V299Q300 291 680 289Q1000 291 1364 303Z" fill="#dbe6f3"/>
<rect x="3" y="303" width="1361" height="43" fill="#eef6ff"/>
<rect x="3" y="346" width="1361" height="1" fill="#8ba0c8"/><rect x="3" y="279" width="1361" height="1" fill="#ccd8ea"/><rect x="1363" y="279" width="1" height="135" fill="#8ba0c8"/>
<!-- Group panel -->
<rect x="3" y="347" width="1361" height="23" fill="#e3ecf7"/>
<path d="M3 370V366Q300 358 680 356Q1000 358 1364 370Z" fill="#dbe6f3"/>
<rect x="3" y="370" width="1361" height="43" fill="#eef6ff"/>
<rect x="3" y="413" width="1361" height="1" fill="#8ba0c8"/>
<!-- Question panel -->
<rect x="3" y="414" width="1361" height="23" fill="#e3ecf7"/>
<path d="M3 437V433Q300 425 680 423Q1000 425 1364 437Z" fill="#dbe6f3"/>
<rect x="3" y="437" width="1361" height="43" fill="#eef6ff"/>
<rect x="3" y="480" width="1361" height="1" fill="#8ba0c8"/><rect x="1363" y="414" width="1" height="67" fill="#8ba0c8"/>
<rect x="0" y="481" width="1366" height="1" fill="#fff"/>
<rect x="0" y="482" width="1366" height="243" fill="#566fa0"/>

<!-- Panel headers -->
<text x="7" y="224" class="b" textLength="81">Administration</text>
<text x="92" y="224" class="p" textLength="126">-- Logged in as: <tspan style="font-weight:bold">shnoulle</tspan></text>
<path d="M222 224L224 219L229 215L232 217L227 222Z" fill="#d8a828" stroke="#333" stroke-width=".8"/>
<text x="7" y="295" class="b" textLength="38">Survey</text>
<text x="48" y="295" class="p" textLength="133">Table not closed(ID:323646)</text>
<text x="7" y="362" class="b" textLength="85">Question group</text>
<text x="99" y="362" class="p" textLength="70">Group (ID:939)</text>
<text x="7" y="429" class="b" textLength="49">Question</text>
<text x="60" y="429" class="p" textLength="162">A bad table in question (ID:28992)</text>

<!-- separators -->
<path d="M76.500 235V270M223.500 235V270M326.500 235V270M385.500 235V270M444.500 235V270M1275.500 235V270M73.500 306V341M1277.500 306V341M67.500 372V408M126.500 372V408M185.500 372V408M1277.500 372V408M67.500 439V475M126.500 439V475M185.500 439V475M322.500 439V475M381.500 439V475M440.500 439V475" stroke="#bcc4cc"/>

<!-- Admin icons -->
<use href="#home" x="9" y="235" width="36" height="34"/>
<use href="#key" x="88" y="235" width="36" height="36"/>
<use href="#ukey" x="132" y="233" width="38" height="38"/>
<use href="#tools" x="176" y="234" width="36" height="36"/>
<use href="#dbcheck" x="237" y="235" width="36" height="36"/>
<use href="#dbout" x="281" y="235" width="36" height="36"/>
<text x="292" y="262" textLength="17" style="font-size:8px;font-weight:bold;fill:#fff">.SQL</text>
<use href="#table" x="340" y="235" width="33" height="33"/>
<use href="#mon" x="397" y="234" width="36" height="38"/>
<use href="#udoc" x="455" y="232" width="40" height="40"/>
<use href="#puz" x="500" y="234" width="38" height="36"/>
<use href="#list" x="1179" y="235" width="30" height="36"/>
<use href="#plusdoc" x="1220" y="234" width="36" height="36"/>
<use href="#power" x="1281" y="236" width="32" height="35"/>
<use href="#help" x="1323" y="234" width="36" height="36"/>

<!-- Survey icons -->
<rect x="12" y="309" width="30" height="29" fill="#d40000" stroke="#000" stroke-width="1.600"/>
<path d="M13 310H38L13 334Z" fill="#e83030" opacity=".5"/>
<path d="M52 309L64 315L52 322Z" fill="#3a9c2a" stroke="#145c10"/>
<use href="#gear" x="95" y="306" width="36" height="36"/>
<use href="#editdoc" x="162" y="308" width="35" height="35"/>
<use href="#tools" x="236" y="307" width="35" height="35"/>
<use href="#searchx" x="310" y="306" width="36" height="37"/>
<use href="#stats" x="384" y="305" width="38" height="38"/>
<use href="#tree" x="463" y="308" width="30" height="35"/>
<use href="#users" x="526" y="304" width="39" height="39"/>
<path d="M201 332.500H210L205.500 337.500Z M277 332.500H286L281.500 337.500Z M351 332.500H360L355.500 337.500Z M427 332.500H436L431.500 337.500Z" fill="#a8b4d0"/>
<use href="#arrows" x="1194" y="305" width="20" height="36"/>
<use href="#plusdoc" x="1230" y="306" width="36" height="36"/>
<use href="#wb" x="1301" y="305" width="60" height="19"/>

<!-- Group icons -->
<use href="#geardoc" x="78" y="372" width="36" height="36"/>
<use href="#editdoc" x="140" y="374" width="35" height="35"/>
<rect x="195" y="375" width="30" height="30" fill="#fff"/>
<text x="195" y="400" textLength="30" lengthAdjust="spacingAndGlyphs" style="font-size:30px;font-weight:bold;fill:url(#gqa)">QA</text>
<use href="#deldoc" x="231" y="372" width="33" height="37"/>
<use href="#dbout" x="277" y="374" width="36" height="35"/>
<text x="288" y="401" textLength="17" style="font-size:8px;font-weight:bold;fill:#fff">.LSG</text>
<use href="#arrows" x="1194" y="371" width="20" height="36"/>
<use href="#plusdoc" x="1230" y="372" width="36" height="36"/>
<use href="#wb" x="1301" y="372" width="60" height="19"/>

<!-- Question icons -->
<use href="#geardoc" x="78" y="439" width="36" height="36"/>
<use href="#editdoc" x="140" y="441" width="35" height="35"/>
<rect x="195" y="442" width="30" height="30" fill="#fff"/>
<text x="195" y="467" textLength="30" lengthAdjust="spacingAndGlyphs" style="font-size:30px;font-weight:bold;fill:url(#gqa)">QA</text>
<use href="#deldoc" x="231" y="439" width="33" height="37"/>
<use href="#dbout" x="277" y="441" width="36" height="35"/>
<text x="288" y="468" textLength="17" style="font-size:8px;font-weight:bold;fill:#fff">.LSQ</text>
<use href="#copy" x="336" y="441" width="33" height="35"/>
<use href="#cond" x="395" y="441" width="32" height="33"/>
<use href="#matrix" x="498" y="441" width="32" height="33"/>
<use href="#wb" x="1301" y="439" width="60" height="19"/>

<!-- selects -->
<text x="911" y="256" class="l" textLength="53">Surveys:</text>
<rect x="970.500" y="237.500" width="199" height="29" rx="4" fill="#fff" stroke="#ccc"/>
<text x="981" y="256" class="s" textLength="96">Table not closed</text>
<rect x="1150" y="242" width="13" height="20" fill="#e6e6e6"/><path d="M1163 242V262H1150" fill="none" stroke="#999" stroke-width="1.200"/><path d="M1153 251H1160L1156.500 255Z" fill="#111"/>
<text x="867" y="327" class="l" textLength="107">Question groups:</text>
<rect x="980.500" y="308.500" width="199" height="29" rx="4" fill="#fff" stroke="#ccc"/>
<text x="992" y="327" class="s" textLength="34">Group</text>
<rect x="1160" y="313" width="13" height="20" fill="#e6e6e6"/><path d="M1173 313V333H1160" fill="none" stroke="#999" stroke-width="1.200"/><path d="M1163 322H1170L1166.500 326Z" fill="#111"/>
<text x="909" y="394" class="l" textLength="65">Questions:</text>
<rect x="980.500" y="375.500" width="199" height="29" rx="4" fill="#fff" stroke="#ccc"/>
<text x="992" y="394" class="s" textLength="169">QBAD: A bad table in questic</text>
<rect x="1160" y="380" width="13" height="20" fill="#e6e6e6"/><path d="M1173 380V400H1160" fill="none" stroke="#999" stroke-width="1.200"/><path d="M1163 389H1170L1166.500 393Z" fill="#111"/>

<!-- cursor -->
<path d="M708.500 486V502L712.500 498.500L715.500 505L718 504L715 497.500L720 497Z" fill="#000" stroke="#fff" stroke-width=".8"/>

<!-- status bar -->
<rect x="0" y="725" width="1366" height="22" fill="#ededed"/>
<rect x="0" y="725" width="1366" height="1" fill="#c4c4c4"/>
<path d="M8 732L16 740M16 732L8 740" stroke="#888" stroke-width="1.800"/>
<circle cx="1203" cy="736" r="6" fill="none" stroke="#c8c8c8" stroke-width="2.400" stroke-dasharray="2.500 2.200"/>
<rect x="1221" y="736" width="6" height="9" fill="#ddd" stroke="#777"/><rect x="1228" y="729" width="5" height="9" fill="#fff" stroke="#222"/>
<path d="M1221 730L1234 745M1234 730L1221 745" stroke="#f01010" stroke-width="1.800"/>
<path d="M1238 734L1241 737L1244 734" fill="none" stroke="#444" stroke-width="1.300"/>
<circle cx="1266" cy="736" r="9" fill="#3ca0f0"/><path d="M1266 736L1266 727A9 9 0 0 1 1275 736Z" fill="#f04020"/><path d="M1266 736H1275A9 9 0 0 1 1266 745Z" fill="#a030e0"/><path d="M1266 736V745A9 9 0 0 1 1257 736Z" fill="#30d050"/><path d="M1266 736H1257A9 9 0 0 1 1266 727Z" fill="#f0d020"/>
<text x="1285" y="742" style="font-size:9px;font-weight:bold;fill:#111">&lt;</text><text x="1291" y="742" style="font-size:14px;font-weight:bold;fill:#111">h</text><text x="1300" y="742" style="font-size:9px;font-weight:bold;fill:#111">/&gt;</text>
<circle cx="1323" cy="732" r="3" fill="none" stroke="#b8a820" stroke-width="1.800"/><path d="M1323 735V745M1318 738H1328" stroke="#b8a820" stroke-width="2"/>
<circle cx="1348" cy="735" r="4" fill="#666"/><circle cx="1354" cy="733" r="4" fill="#aaa"/><circle cx="1352" cy="739" r="3.500" fill="#777"/>
</svg>
</body></html>
